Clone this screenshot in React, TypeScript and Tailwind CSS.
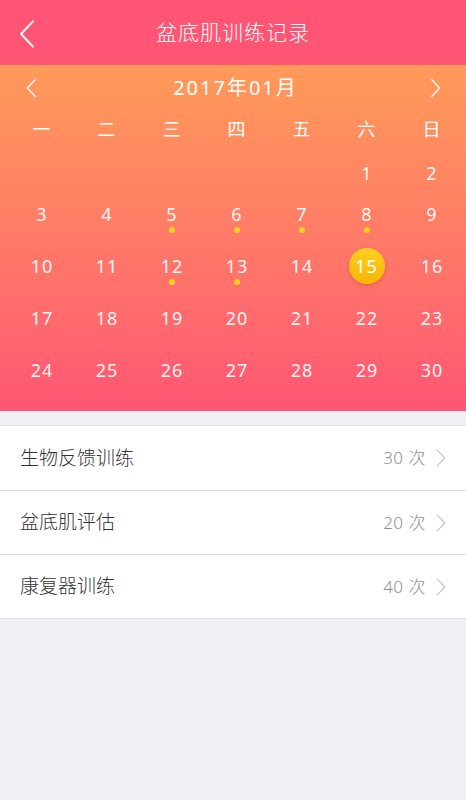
import React from "react";

const weekdays = ["一", "二", "三", "四", "五", "六", "日"];

// 2017年01月: 1号是周日, 但截图里排在"六"列
const rows: (number | null)[][] = [
  [null, null, null, null, null, 1, 2],
  [3, 4, 5, 6, 7, 8, 9],
  [10, 11, 12, 13, 14, 15, 16],
  [17, 18, 19, 20, 21, 22, 23],
  [24, 25, 26, 27, 28, 29, 30],
];

const trained = [5, 6, 7, 8, 12, 13];
const today = 15;

const records = [
  { name: "生物反馈训练", count: 30 },
  { name: "盆底肌评估", count: 20 },
  { name: "康复器训练", count: 40 },
];

function Chevron({ dir, className, sw = 1.8 }: { dir: "left" | "right"; className?: string; sw?: number }) {
  return (
    <svg viewBox="0 0 12 22" className={className} fill="none" stroke="currentColor" strokeWidth={sw} strokeLinecap="round" strokeLinejoin="round">
      {dir === "left" ? <path d="M10.5 1.5 L1.5 11 L10.5 20.5" /> : <path d="M1.5 1.5 L10.5 11 L1.5 20.5" />}
    </svg>
  );
}

export default function App() {
  return (
    <div className="w-[466px] min-h-[800px] bg-[#efeff4]" style={{ fontFamily: '"Noto Sans", "Noto Sans CJK SC", sans-serif' }}>
      {/* 顶部导航 */}
      <div className="relative h-[65px] bg-[#ff5574] flex items-center justify-center">
        <Chevron dir="left" sw={1.5} className="absolute left-[19px] top-[19px] w-[16px] h-[30px] text-white" />
        <h1 className="text-white text-[21px] font-light tracking-[1px]">盆底肌训练记录</h1>
      </div>

      {/* 日历 */}
      <div className="bg-gradient-to-b from-[#ff9a58] to-[#ff5573] pb-[15px] text-white">
        <div className="h-[46px] flex items-center justify-between pl-[26px] pr-[25px]">
          <Chevron dir="left" sw={1.6} className="w-[11px] h-[20px] text-white/90" />
          <span className="text-[20px] tracking-[2px] pl-[4px]">2017年01月</span>
          <Chevron dir="right" sw={1.6} className="w-[11px] h-[20px] text-white/90" />
        </div>

        <div className="grid grid-cols-[repeat(7,65px)] pl-[9px] h-[36px]">
          {weekdays.map((w) => (
            <div key={w} className="text-center text-[18px] leading-[36px]">{w}</div>
          ))}
        </div>

        {rows.map((row, i) => (
          <div key={i} className={`grid grid-cols-[repeat(7,65px)] pl-[9px] ${i === 0 ? "h-[41px]" : "h-[52px]"}`}>
            {row.map((d, j) => (
              <div key={j} className="flex flex-col items-center pt-[14px]">
                {d === null ? null : d === today ? (
                  <div className="relative h-[24px] w-full flex justify-center">
                    <div className="absolute -top-[6px] w-[36px] h-[36px] rounded-full bg-gradient-to-b from-[#ffd01f] to-[#f7b500] shadow-[0_2px_4px_rgba(200,60,40,0.35)] flex items-center justify-center text-[18px] tracking-[1px]">
                      {d}
                    </div>
                  </div>
                ) : (
                  <>
                    <span className="text-[18px] leading-[24px] tracking-[1px] pl-[1px] text-white/95">{d}</span>
                    {trained.includes(d) && <span className="mt-[1px] w-[6px] h-[6px] rounded-full bg-[#ffd21f]" />}
                  </>
                )}
              </div>
            ))}
          </div>
        ))}
      </div>

      {/* 训练记录列表 */}
      <div className="mt-[14px] bg-white border-t border-b border-[#e0e0e4]">
        {records.map((r, i) => (
          <div key={r.name} className={`h-[64px] flex items-center pl-[20px] pr-[20px] ${i > 0 ? "border-t border-[#dcdce0]" : ""}`}>
            <span className="flex-1 text-[19px] font-light text-[#333]">{r.name}</span>
            <span className="text-[17px] font-light text-[#8e8e93] mr-[10px] tracking-[0.5px]">{r.count} 次</span>
            <Chevron dir="right" sw={1.5} className="w-[10px] h-[20px] text-[#c7c7cc]" />
          </div>
        ))}
      </div>
    </div>
  );
}
